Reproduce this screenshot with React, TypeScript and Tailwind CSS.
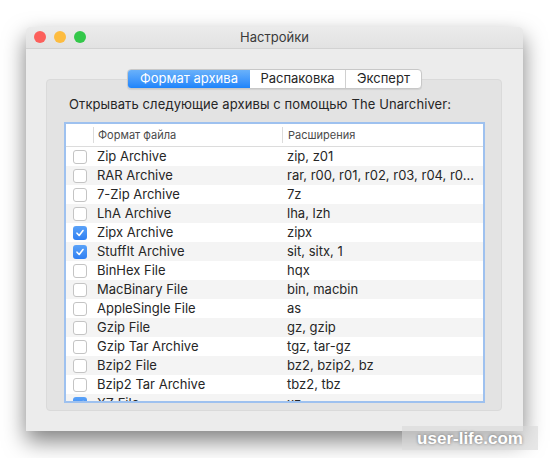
import type { ReactElement } from "react";

interface Row {
  name: string;
  ext: string;
  checked: boolean;
}

const rows: Row[] = [
  { name: "Zip Archive", ext: "zip, z01", checked: false },
  { name: "RAR Archive", ext: "rar, r00, r01, r02, r03, r04, r0…", checked: false },
  { name: "7-Zip Archive", ext: "7z", checked: false },
  { name: "LhA Archive", ext: "lha, lzh", checked: false },
  { name: "Zipx Archive", ext: "zipx", checked: true },
  { name: "StuffIt Archive", ext: "sit, sitx, 1", checked: true },
  { name: "BinHex File", ext: "hqx", checked: false },
  { name: "MacBinary File", ext: "bin, macbin", checked: false },
  { name: "AppleSingle File", ext: "as", checked: false },
  { name: "Gzip File", ext: "gz, gzip", checked: false },
  { name: "Gzip Tar Archive", ext: "tgz, tar-gz", checked: false },
  { name: "Bzip2 File", ext: "bz2, bzip2, bz", checked: false },
  { name: "Bzip2 Tar Archive", ext: "tbz2, tbz", checked: false },
  { name: "XZ File", ext: "xz", checked: true },
];

function Checkbox({ checked }: { checked: boolean }): ReactElement {
  if (checked) {
    return (
      <span className="flex h-[14px] w-[14px] items-center justify-center rounded-[3px] bg-gradient-to-b from-[#5aa2f8] to-[#2f7ff2]">
        <svg width="10" height="10" viewBox="0 0 10 10" fill="none">
          <path d="M2 5.2 L4.2 7.5 L8 2.5" stroke="white" strokeWidth="1.6" strokeLinecap="round" strokeLinejoin="round" />
        </svg>
      </span>
    );
  }
  return <span className="h-[14px] w-[14px] rounded-[3px] border border-[#c4c4c4] bg-white" />;
}

export default function App(): ReactElement {
  return (
    <div
      className="relative h-[458px] w-[550px] overflow-hidden bg-white pl-[26px] pt-[27px] text-[#262626]"
      style={{ fontFamily: "Inter, 'Liberation Sans', sans-serif" }}
    >
      <div className="flex h-[404px] w-[497px] flex-col rounded-t-[5px] bg-[#ececec] shadow-[0_10px_22px_rgba(0,0,0,0.5)]">
        {/* title bar */}
        <div className="relative flex h-[22px] shrink-0 items-center justify-center rounded-t-[5px] border-b border-[#d2d2d2] bg-gradient-to-b from-[#ebebeb] to-[#e2e2e2]">
          <div className="absolute left-[8px] top-[4px] flex gap-[8px]">
            <span className="h-[12px] w-[12px] rounded-full bg-[#fc605c]" />
            <span className="h-[12px] w-[12px] rounded-full bg-[#fdbc40]" />
            <span className="h-[12px] w-[12px] rounded-full bg-[#34c84a]" />
          </div>
          <span className="text-[13px] text-[#3a3a3a]">Настройки</span>
        </div>

        <div className="flex flex-col pl-[20px] pt-[20px]">
          {/* tabs */}
          <div className="relative z-10 ml-[81px] flex h-[20px] w-[295px] overflow-hidden rounded-[4px] border border-[#c8c8c8] bg-white text-[13px] shadow-[0_1px_1px_rgba(0,0,0,0.08)]">
            <div className="flex w-[122px] items-center justify-center bg-gradient-to-b from-[#69b1fa] to-[#1c84fb] text-white">
              Формат архива
            </div>
            <div className="flex w-[96px] items-center justify-center border-r border-[#d0d0d0]">Распаковка</div>
            <div className="flex flex-1 items-center justify-center">Эксперт</div>
          </div>

          {/* group box */}
          <div className="-mt-[10px] flex h-[332px] w-[456px] flex-col rounded-[4px] border border-[#dadada] bg-[#e3e3e3] pl-[17px] pt-[15px]">
            <div className="pl-[5px] text-[13px] leading-[18px] tracking-[0.1px]">
              Открывать следующие архивы с помощью The Unarchiver:
            </div>
            <div className="mt-[9px] flex h-[281px] w-[421px] flex-col overflow-hidden border-2 border-[#9ec1ef] bg-white">
              <div className="flex h-[23px] shrink-0 items-center border-b border-[#dcdcdc] text-[11px] text-[#4a4a4a]">
                <div className="h-[16px] w-[28px] border-r border-[#dcdcdc]" />
                <div className="flex h-[16px] w-[189px] items-center border-r border-[#dcdcdc] pl-[4px]">Формат файла</div>
                <div className="pl-[5px]">Расширения</div>
              </div>
              {rows.map((row, i) => (
                <div
                  key={row.name}
                  className={`flex h-[19px] shrink-0 items-center text-[13px] ${i % 2 === 1 ? "bg-[#f4f4f4]" : "bg-white"}`}
                >
                  <div className="flex w-[28px] justify-center">
                    <Checkbox checked={row.checked} />
                  </div>
                  <div className="w-[189px] pl-[3px]">{row.name}</div>
                  <div className="pl-[4px]">{row.ext}</div>
                </div>
              ))}
            </div>
          </div>
        </div>
      </div>

      {/* watermark */}
      <div className="absolute left-[402px] top-[426px] flex h-[24px] w-[136px] items-center justify-center bg-[#d8d8d8]/60">
        <span
          className="whitespace-nowrap text-[17px] font-bold leading-none text-white [text-shadow:0_0_3px_rgba(0,0,0,0.45)]"
          style={{ fontFamily: "'Liberation Sans', sans-serif" }}
        >
          user-life.com
        </span>
      </div>
    </div>
  );
}
